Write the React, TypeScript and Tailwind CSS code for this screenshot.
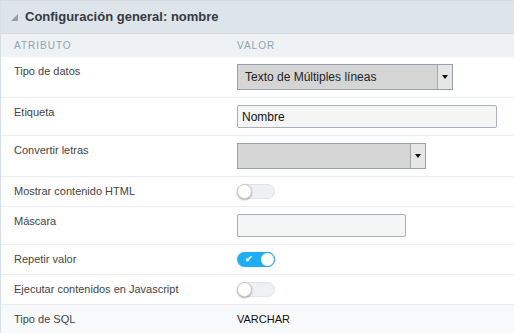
import React from "react";

const font = { fontFamily: '"Liberation Sans", Arial, sans-serif' };

function Toggle({ on }: { on?: boolean }) {
  if (on) {
    return (
      <div className="relative w-[38px] h-[15px] rounded-full bg-[#1eaef5]">
        <span className="absolute left-[8px] top-[0px] text-[9px] leading-[15px] text-white font-bold">✔</span>
        <div className="absolute right-0 top-0 w-[15px] h-[15px] rounded-full bg-white border border-[#1a9fe0]" />
      </div>
    );
  }
  return (
    <div className="relative w-[38px] h-[15px] rounded-full bg-[#edf1f4] border border-[#dfe4e8]">
      <div className="absolute left-[-1px] top-[-1px] w-[15px] h-[15px] rounded-full bg-white border border-[#c9cdd1] shadow-[0_1px_2px_rgba(0,0,0,0.35)]" />
    </div>
  );
}

function Select({ width, text }: { width: string; text?: string }) {
  return (
    <div className={`flex h-[26px] ${width} border border-[#9aa1a9] bg-[#d5d5d5]`}>
      <div className="flex-1 flex items-center pl-[7px] text-[12px] text-[#222]">{text}</div>
      <div className="w-[15px] h-full bg-[#e6e6e6] border-l border-[#a9a9a9] flex items-center justify-center">
        <svg width="6" height="4" viewBox="0 0 6 4">
          <polygon points="0,0 6,0 3,4" fill="#111" />
        </svg>
      </div>
    </div>
  );
}

function Input({ width, value }: { width: string; value?: string }) {
  return (
    <div className={`flex items-center h-[23px] ${width} border border-[#a9b0b8] rounded-[2px] bg-[#f5f5f5] pl-[4px] text-[12px] text-[#111]`}>
      {value}
    </div>
  );
}

function Row({ label, children, last }: { label: string; children: React.ReactNode; last?: boolean }) {
  return (
    <div className={`flex pt-[7px] pb-[7px] ${last ? "bg-[#f8f9fb]" : "border-b border-[#e8edf2]"}`}>
      <div className="w-[236px] shrink-0 pl-[13px] pt-[1px] text-[11px] leading-[13px] text-[#444]">{label}</div>
      <div className="flex-1">{children}</div>
    </div>
  );
}

export default function App() {
  return (
    <div style={font} className="w-[514px] h-[333px] bg-white overflow-hidden border-l border-[#d6dfe6]">
      <div className="h-[34px] bg-[#dde4ea] border-t border-[#d3dae0] border-b border-[#cbd5da] flex items-center pl-[10px]">
        <svg width="7" height="7" viewBox="0 0 7 7" className="mr-[7px] mt-[1px]">
          <polygon points="7,0 7,7 0,7" fill="#9a9ea3" />
        </svg>
        <span className="text-[13px] font-bold text-[#353a3f]">Configuración general: nombre</span>
      </div>
      <div className="h-[23px] bg-[#eef2f5] flex items-center text-[10px] tracking-[1px] text-[#8ea3b3]">
        <div className="w-[236px] pl-[13px]">ATRIBUTO</div>
        <div>VALOR</div>
      </div>
      <Row label="Tipo de datos">
        <Select width="w-[216px]" text="Texto de Múltiples líneas" />
      </Row>
      <Row label="Etiqueta">
        <Input width="w-[260px]" value="Nombre" />
      </Row>
      <Row label="Convertir letras">
        <Select width="w-[189px]" />
      </Row>
      <Row label="Mostrar contenido HTML">
        <Toggle />
      </Row>
      <Row label="Máscara">
        <Input width="w-[169px]" />
      </Row>
      <Row label="Repetir valor">
        <Toggle on />
      </Row>
      <Row label="Ejecutar contenidos en Javascript">
        <Toggle />
      </Row>
      <Row label="Tipo de SQL" last>
        <div className="text-[11px] leading-[13px] pt-[1px] text-[#111]">VARCHAR</div>
      </Row>
    </div>
  );
}
